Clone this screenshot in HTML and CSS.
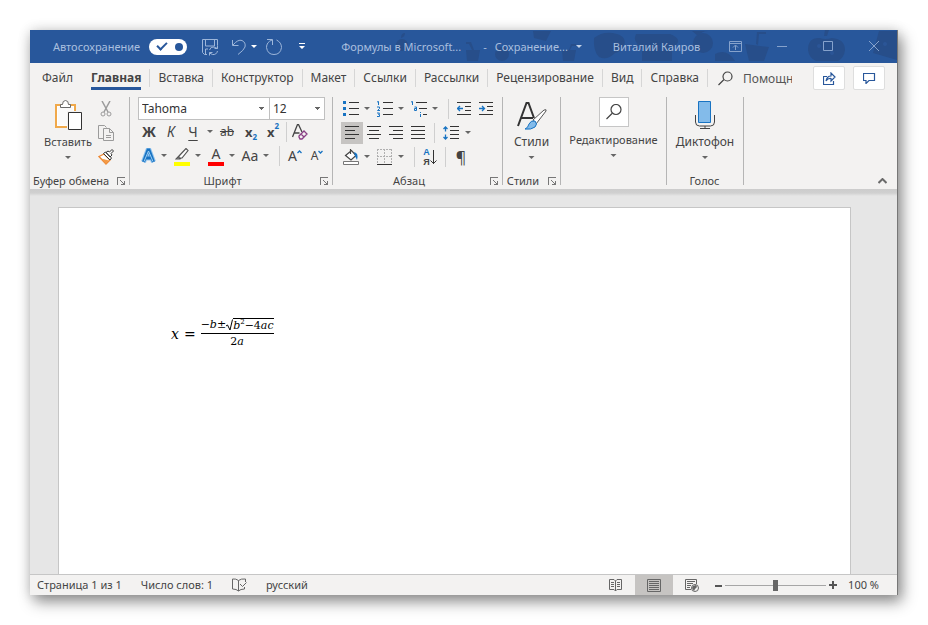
FILE: index.html
```html
<!DOCTYPE html>
<html lang="ru">
<head>
    <meta charset="UTF-8">
    <meta name="viewport" content="width=device-width, initial-scale=1.0">
    <title>Формулы в Microsoft Word</title>
    <link rel="stylesheet" href="styles.css">
</head>
<body>

    <div class="window">

        <!-- Title bar -->
        <header class="titlebar">
            <svg class="titlebar-art" width="400" height="33" viewBox="0 0 400 33" aria-hidden="true">
                <g fill="#274e8a">
                    <circle cx="6" cy="15" r="6"/><path d="M5 8q0-5 4-5q0 4-4 5z"/>
                    <path d="M70 20h14l-2 11h-11zM76 20l-3-6h-3v-2h5l3 8z"/>
                    <circle cx="106" cy="24" r="7"/>
                    <path d="M137 1h18l-5 10l-12-3z"/>
                    <path d="M166 20h14l-2 11h-11zM173 20l2-6h5v2h-4l-2 4z"/>
                    <path d="M198 8q10-8 23-4q10 3 7 12q-4 6-9 7q-8 8-16 4q-6-6-5-19z"/>
                    <path d="M240 4h34q13 5 5 12l-3 3v12h-30v-12q-10-8-6-15z"/>
                    <circle cx="307" cy="13" r="10"/><path d="M296 1l6 5q4-5 10-5z"/>
                    <path d="M319 24q12-6 20 7h-20z"/>
                    <path d="M349 14l24 3-5 14h-15zM360 14l1-12h9v2h-7l-1 11z"/>
                </g>
            </svg>
            <svg class="titlebar-art titlebar-art-right" width="92" height="33" viewBox="0 0 92 33" aria-hidden="true">
                <g fill="#274e8a">
                    <path d="M3 20q0-13 12-12q5 2 12 0q13 1 13 12q-1 8-7 11h-22q-7-3-8-11zM19 6l1-6h4l-2 6z"/>
                    <path d="M74 1h18v29l-24-7z"/>
                </g>
                <g fill="#2b5597"><circle cx="14" cy="16" r="2"/><circle cx="27" cy="23" r="2"/><circle cx="80" cy="14" r="2"/></g>
            </svg>

            <label class="autosave">
                <span>Автосохранение</span>
                <input type="checkbox" class="switch" checked>
            </label>
            <div class="quick">
                <button class="bar-btn" aria-label="Сохранить">
                    <svg width="18" height="18" viewBox="0 0 18 18"><path d="M6 16.500H3.500l-2-2V1.500h15v6M4.500 2v6h9V2M4.500 16v-5H7M8.500 12q1-3.500 4.500-3l3.500 1.500M16.500 7.500v3h-3M16.500 13q-1 4-5 3.500l-3-1.500M8.500 17.500v-3h3"/></svg>
                </button>
                <button class="bar-btn" aria-label="Отменить">
                    <svg width="16" height="18" viewBox="0 0 16 18"><path d="M1.500 2v5.500h6M2 7q5-6 9-4.500q4 2 3 6.500q-1 3-7 7.500"/></svg>
                </button>
                <button class="bar-btn bar-caret" aria-label="Список отмены">
                    <svg width="6" height="4" viewBox="0 0 6 4"><path class="solid" d="M0 0h6L3 3z"/></svg>
                </button>
                <button class="bar-btn" aria-label="Повторить">
                    <svg width="18" height="18" viewBox="0 0 18 18"><path d="M2 1.500h5.500V7M7 2Q1.500 4 1.500 9.500q1 7 7.500 7t7.500-7q0-5-5-7.500"/></svg>
                </button>
                <button class="bar-btn bar-more" aria-label="Настройка панели">
                    <svg width="6" height="7" viewBox="0 0 6 7"><path class="solid" d="M0 0h6v1H0zM0 3h6L3 6z"/></svg>
                </button>
            </div>
            <div class="doc-title">
                <span>Формулы в Microsoft...</span>
                <span>-</span>
                <span>Сохранение...</span>
                <svg width="6" height="4" viewBox="0 0 6 4"><path class="pale" d="M0 0h6L3 3z"/></svg>
            </div>
            <span class="user">Виталий Каиров</span>
            <div class="win-controls">
                <button class="bar-btn" aria-label="Параметры ленты">
                    <svg width="13" height="11" viewBox="0 0 13 11"><path d="M.5.5h12v10H.5zM.5 2.500h12M6.500 9V4.500M4 6.500l2.500-2.500L9 6.500"/></svg>
                </button>
                <button class="bar-btn" aria-label="Свернуть">
                    <svg width="11" height="11" viewBox="0 0 11 11"><path d="M0 5.500h10"/></svg>
                </button>
                <button class="bar-btn" aria-label="Развернуть">
                    <svg width="11" height="11" viewBox="0 0 11 11"><path d="M.5.5h9v9h-9z"/></svg>
                </button>
                <button class="bar-btn" aria-label="Закрыть">
                    <svg width="11" height="11" viewBox="0 0 11 11"><path d="M0 0l10 10M10 0L0 10"/></svg>
                </button>
            </div>
        </header>

        <!-- Tabs -->
        <nav class="tabs">
            <a href="#" class="tab tab-file">Файл</a>
            <a href="#" class="tab tab-active">Главная</a>
            <a href="#" class="tab">Вставка</a>
            <a href="#" class="tab">Конструктор</a>
            <a href="#" class="tab">Макет</a>
            <a href="#" class="tab">Ссылки</a>
            <a href="#" class="tab">Рассылки</a>
            <a href="#" class="tab">Рецензирование</a>
            <a href="#" class="tab">Вид</a>
            <a href="#" class="tab">Справка</a>
            <label class="tell-me">
                <svg width="15" height="15" viewBox="0 0 15 15"><path class="line" d="M.5 14L6 8.500M5 5.500a4.500 4.500 0 1 1 9 0a4.500 4.500 0 1 1-9 0z"/></svg>
                <input type="text" placeholder="Помощник" aria-label="Помощник">
            </label>
            <div class="tab-actions">
                <button class="card-btn" aria-label="Поделиться">
                    <svg width="13" height="13" viewBox="0 0 13 13"><path class="blue" d="M4 4.500H.5v8h10V9M3 9q1-5 5-5V1l4 4-4 4V6.500Q5 6 3 9z"/></svg>
                </button>
                <button class="card-btn" aria-label="Примечания">
                    <svg width="13" height="12" viewBox="0 0 13 12"><path class="blue" d="M.5 1.500h11v7H6l-3 3v-3H.5z"/></svg>
                </button>
            </div>
        </nav>

        <!-- Ribbon -->
        <main class="ribbon">
            <section class="group group-clipboard">
                <div class="group-body clipboard">
                    <button class="big-btn">
                        <svg width="28" height="31" viewBox="0 0 28 31">
                            <path d="M2 5h19v22H2z" fill="#fff" stroke="#f0a94b" stroke-width="2"/>
                            <path d="M4 7h15v18H4z" fill="#fafafa"/>
                            <path d="M6.500 7.500v-3h2q0-4 3-4t3 4h2v3z" fill="#fff" stroke="#6a6a6a"/>
                            <path d="M13 11h15v20H13z" fill="#f3f2f1"/>
                            <path d="M14.500 12.500h13v17h-13z" fill="#fff" stroke="#333"/>
                        </svg>
                        <span>Вставить</span>
                        <i class="caret"></i>
                    </button>
                    <div class="stack">
                        <button class="tool" aria-label="Вырезать">
                            <svg width="12" height="16" viewBox="0 0 12 16"><path d="M2 0l6 11M10 0L4 11" fill="none" stroke="#9b9b9b" stroke-width="1.500"/><circle cx="3" cy="13" r="2" fill="none" stroke="#9b9b9b"/><circle cx="9" cy="13" r="2" fill="none" stroke="#9b9b9b"/></svg>
                        </button>
                        <button class="tool" aria-label="Копировать">
                            <svg width="16" height="16" viewBox="0 0 16 16"><path d="M5 13.500H.5V.5h6l2 2M5.500 3.500h6l4 4v8h-10zM11.500 3.500v4h4M8 10.500h5M8 12.500h5" fill="none" stroke="#9b9b9b"/></svg>
                        </button>
                        <button class="tool" aria-label="Формат по образцу">
                            <svg width="16" height="16" viewBox="0 0 16 16"><path d="M1 7.500L6 5l6 6-4 4z" fill="#fff" stroke="#ed8733" stroke-width="1.300"/><path d="M3 9.500l8 2-3 3.500z" fill="#f39a45"/><path d="M5.500 4.500l2-1.500 6 6-1.500 2zM8 3.500l2-1.500 1.500 1L14 .5 15.500 2 13 4.500l1 1.500-2 2z" fill="#fff" stroke="#333"/></svg>
                        </button>
                    </div>
                </div>
                <footer class="group-label"><span>Буфер обмена</span><button class="launcher" aria-label="Буфер обмена: параметры"></button></footer>
            </section>

            <section class="group group-font">
                <div class="group-body">
                    <div class="row row-combos">
                        <select class="combo combo-font" aria-label="Шрифт"><option>Tahoma</option></select>
                        <select class="combo combo-size" aria-label="Размер"><option>12</option></select>
                    </div>
                    <div class="row">
                        <button class="tool bold">Ж</button>
                        <button class="tool italic">К</button>
                        <button class="tool underline">Ч</button>
                        <i class="caret"></i>
                        <button class="tool strike">ab</button>
                        <button class="tool index">x<sub>2</sub></button>
                        <button class="tool index">x<sup>2</sup></button>
                        <i class="rule rule-thin"></i>
                        <button class="tool" aria-label="Очистить формат">
                            <svg width="16" height="16" viewBox="0 0 16 16"><path d="M.5 13L5.500.5h1L10 8M2.500 9h5" fill="none" stroke="#444" stroke-width="1.300"/><path d="M7 12l5-5 3 3-5 5H8l-1-2zM9 10l3 3" fill="#f3f2f1" stroke="#8a3f86" stroke-width="1.300"/></svg>
                        </button>
                    </div>
                    <div class="row row-split">
                        <button class="tool" aria-label="Текстовые эффекты">
                            <svg width="15" height="16" viewBox="0 0 15 16"><path d="M2.500 14L7 2h1l4.500 12M4.500 10h6" fill="none" stroke="#8fc3ee" stroke-width="5"/><path d="M2.500 14L7 2h1l4.500 12M4.500 10h6" fill="none" stroke="#1873c2" stroke-width="3"/><path d="M3 13.500L7.500 3L12 13.500" fill="none" stroke="#9fd0f5"/></svg>
                        </button>
                        <i class="caret"></i>
                        <button class="tool swatch swatch-yellow" aria-label="Цвет выделения">
                            <svg width="14" height="14" viewBox="0 0 14 14"><path d="M4 8L11 .5l2 2L7 10H4zM4 8L1 11h4l1-1" fill="#fff" stroke="#555" stroke-width="1.200"/></svg>
                        </button>
                        <i class="caret"></i>
                        <button class="tool swatch swatch-red">А</button>
                        <i class="caret"></i>
                        <button class="tool">Aa</button>
                        <i class="caret"></i>
                        <i class="rule"></i>
                        <button class="tool grow" aria-label="Увеличить размер">A<svg width="5" height="4" viewBox="0 0 5 4"><path class="accent" d="M.5 3l2-2 2 2"/></svg></button>
                        <button class="tool grow shrink" aria-label="Уменьшить размер">A<svg width="5" height="4" viewBox="0 0 5 4"><path class="accent" d="M.5 1l2 2 2-2"/></svg></button>
                    </div>
                </div>
                <footer class="group-label"><span>Шрифт</span><button class="launcher" aria-label="Шрифт: параметры"></button></footer>
            </section>

            <section class="group group-para">
                <div class="group-body">
                    <div class="row row-split row-lists">
                        <button class="tool" aria-label="Маркеры">
                            <svg width="16" height="16" viewBox="0 0 16 16"><path fill="#1873c2" d="M0 0h3v3H0zM0 6h3v3H0zM0 12h3v3H0z"/><path class="dark" d="M6 1.500h10M6 7.500h10M6 13.500h10"/></svg>
                        </button>
                        <i class="caret"></i>
                        <button class="tool" aria-label="Нумерация">
                            <svg width="16" height="16" viewBox="0 0 16 16"><path d="M0 1l1.500-.5V4M0 6h2.500v1.500L.5 9.500H3M0 12h2.500l-1 1.500h1v2H0" fill="none" stroke="#1873c2"/><path class="dark" d="M6 1.500h10M6 7.500h10M6 13.500h10"/></svg>
                        </button>
                        <i class="caret"></i>
                        <button class="tool" aria-label="Многоуровневый список">
                            <svg width="16" height="16" viewBox="0 0 16 16"><path d="M0 1l1.500-.5V4M3.500 6h2v3.500h-2v-2h2M9.500 11v1M9.500 13v3" fill="none" stroke="#1873c2"/><path class="dark" d="M5 1.500h11M8 7.500h8M12 13.500h4"/></svg>
                        </button>
                        <i class="caret"></i>
                        <i class="rule"></i>
                        <button class="tool" aria-label="Уменьшить отступ">
                            <svg width="15" height="14" viewBox="0 0 15 14"><path class="dark" d="M0 .5h14M8 4.500h6M8 8.500h6M0 12.500h14"/><path class="accent" d="M6 6.500H1M3 4L.5 6.500L3 9"/></svg>
                        </button>
                        <button class="tool" aria-label="Увеличить отступ">
                            <svg width="15" height="14" viewBox="0 0 15 14"><path class="dark" d="M0 .5h14M8 4.500h6M8 8.500h6M0 12.500h14"/><path class="accent" d="M0 6.500h5M3 4l2.500 2.500L3 9"/></svg>
                        </button>
                    </div>
                    <div class="row">
                        <button class="tool pressed" aria-label="По левому краю">
                            <svg width="14" height="14" viewBox="0 0 14 14"><path class="dark" d="M0 .5h14M0 4.500h10M0 8.500h14M0 12.500h10"/></svg>
                        </button>
                        <button class="tool" aria-label="По центру">
                            <svg width="14" height="14" viewBox="0 0 14 14"><path class="dark" d="M0 .5h14M2 4.500h10M0 8.500h14M2 12.500h10"/></svg>
                        </button>
                        <button class="tool" aria-label="По правому краю">
                            <svg width="14" height="14" viewBox="0 0 14 14"><path class="dark" d="M0 .5h14M4 4.500h10M0 8.500h14M4 12.500h10"/></svg>
                        </button>
                        <button class="tool" aria-label="По ширине">
                            <svg width="14" height="14" viewBox="0 0 14 14"><path class="dark" d="M0 .5h14M0 4.500h14M0 8.500h14M0 12.500h14"/></svg>
                        </button>
                        <i class="rule"></i>
                        <button class="tool" aria-label="Интервал">
                            <svg width="16" height="14" viewBox="0 0 16 14"><path class="accent" d="M2.500 1v4.500M.5 3l2-2 2 2M2.500 13V8.500M.5 11l2 2 2-2"/><path class="dark" d="M7 .5h9M7 4.500h9M7 8.500h9M7 12.500h9"/></svg>
                        </button>
                        <i class="caret"></i>
                    </div>
                    <div class="row row-split">
                        <button class="tool" aria-label="Заливка">
                            <svg width="16" height="16" viewBox="0 0 16 16"><path d="M2.500 6.500l6-5 4.500 5-5 4.500z M7.500 0v5" fill="#fff" stroke="#444" stroke-width="1.200"/><path d="M11 3q5 1 3 8l-2-4z" fill="#1873c2"/><path d="M.5 12.500h15v3H.5z" fill="#fff" stroke="#777"/></svg>
                        </button>
                        <i class="caret"></i>
                        <button class="tool" aria-label="Границы">
                            <svg width="16" height="16" viewBox="0 0 16 16"><path d="M.5 0v14M7.500 0v14M14.500 0v14M0 .5h15M0 7.500h15" fill="none" stroke="#b0b0b0" stroke-dasharray="2 1"/><path class="dark" d="M0 15.500h15"/></svg>
                        </button>
                        <i class="caret"></i>
                        <i class="rule"></i>
                        <button class="tool" aria-label="Сортировка">
                            <span class="sort-letters"><b>А</b><b>Я</b></span>
                            <svg width="7" height="15" viewBox="0 0 7 15"><path class="dark" d="M3.500 0v14M.5 10.500l3 3 3-3"/></svg>
                        </button>
                        <i class="rule"></i>
                        <button class="tool pilcrow">¶</button>
                    </div>
                </div>
                <footer class="group-label"><span>Абзац</span><button class="launcher" aria-label="Абзац: параметры"></button></footer>
            </section>

            <section class="group group-styles">
                <div class="group-body">
                    <button class="big-btn">
                        <svg width="30" height="31" viewBox="0 0 30 31">
                            <path d="M1 26L9.500 3h2L17 18M4 18h12" fill="none" stroke="#333" stroke-width="2"/>
                            <path d="M16 20L27 10q3-1 2 1L19 24z" fill="#fff" stroke="#555"/>
                            <path d="M8 29q3-1 4-5q2-4 6-3q3 3 0 6q-4 3-10 2z" fill="#83bbea" stroke="#1873c2"/>
                        </svg>
                        <span>Стили</span>
                        <i class="caret"></i>
                    </button>
                </div>
                <footer class="group-label"><span>Стили</span><button class="launcher" aria-label="Стили: параметры"></button></footer>
            </section>

            <section class="group group-edit">
                <div class="group-body">
                    <button class="big-btn">
                        <span class="frame"><svg width="16" height="16" viewBox="0 0 16 16"><path class="line" d="M.5 15L6 9.500M5 5.500a5 5 0 1 1 10 0a5 5 0 1 1-10 0z"/></svg></span>
                        <span>Редактирование</span>
                        <i class="caret"></i>
                    </button>
                </div>
            </section>

            <section class="group group-voice">
                <div class="group-body">
                    <button class="big-btn">
                        <svg width="20" height="31" viewBox="0 0 20 31">
                            <path d="M.5 15v7q0 4 4 4h11q4 0 4-4v-7M10 26v3M5 28.500h10" fill="none" stroke="#444"/>
                            <path d="M3.500 1.500h12v21h-12z" fill="#83bbea" stroke="#1873c2" stroke-linejoin="round"/>
                        </svg>
                        <span>Диктофон</span>
                        <i class="caret"></i>
                    </button>
                </div>
                <footer class="group-label"><span>Голос</span></footer>
            </section>

            <button class="collapse" aria-label="Свернуть ленту">
                <svg width="9" height="6" viewBox="0 0 9 6"><path d="M.5 5l4-4 4 4" fill="none" stroke="#6a6a6a" stroke-width="2"/></svg>
            </button>
        </main>

        <!-- Document -->
        <div class="workspace">
            <article class="page">
                <div class="formula">
                    <i>x</i><span class="equals">=</span>
                    <span class="fraction">
                        <span class="numerator">−<i>b</i>±<svg width="7" height="12" viewBox="0 0 7 12"><path d="M0 7l1.500-1L4 11L6.500.5" fill="none" stroke="#000"/></svg><span class="radicand"><i>b</i><sup>2</sup>−4<i>ac</i></span></span>
                        <span class="denominator">2<i>a</i></span>
                    </span>
                </div>
            </article>
        </div>

        <!-- Status bar -->
        <footer class="status">
            <span>Страница 1 из 1</span>
            <span>Число слов: 1</span>
            <svg width="15" height="14" viewBox="0 0 15 14"><path class="grey" d="M6.500 2.500Q4 .5.500 1v10q4 0 6 2q2-2 6-2V9M6.500 2.500V13M6.500 2.500Q9 .5 13.500 1v3M8 6l2.500 2.500 4-4"/></svg>
            <span>русский</span>
            <div class="views">
                <button class="view" aria-label="Режим чтения">
                    <svg width="14" height="13" viewBox="0 0 14 13"><path class="grey" d="M6.500 2L5 .5H.5v10H5L6.500 12L8 10.500h4.500V.5H8zM6.500 2v10M2 3.500h3M2 5.500h3M2 7.500h3M8 3.500h3M8 5.500h3M8 7.500h3"/></svg>
                </button>
                <button class="view view-on" aria-label="Разметка страницы">
                    <svg width="14" height="13" viewBox="0 0 14 13"><path class="grey" d="M.5.5h13v12H.5zM2 2.500h10M2 4.500h10M2 6.500h10M2 8.500h10M2 10.500h10"/></svg>
                </button>
                <button class="view" aria-label="Веб-документ">
                    <svg width="14" height="13" viewBox="0 0 14 13"><path class="grey" d="M6 10.500H.5V.5h11V5M2 2.500h8M2 4.500h6M2 6.500h4M2 8.500h3"/><circle cx="10" cy="9" r="3.500" fill="#f3f2f1" stroke="#666"/><path fill="#666" d="M8 7l3-1 1 2-2 2-1 2-2-3z"/></svg>
                </button>
            </div>
            <div class="zoom">
                <button aria-label="Уменьшить"><svg width="7" height="7" viewBox="0 0 7 7"><path fill="#555" d="M0 3h7v2H0z"/></svg></button>
                <input type="range" class="zoom-range" min="0" max="100" value="50" aria-label="Масштаб">
                <button aria-label="Увеличить"><svg width="8" height="8" viewBox="0 0 8 8"><path fill="#555" d="M0 3h3V0h2v3h3v2H5v3H3V5H0z"/></svg></button>
                <span>100 %</span>
            </div>
        </footer>
    </div>

</body>
</html>
```

FILE: styles.css
```css
/* --- Basic Setup & Theme --- */
:root {
    --brand: #28579b;
    --chrome: #f3f2f1;
    --text: #444444;
    --accent: #1873c2;
    --line: #c6c6c6;
}

* { box-sizing: border-box; }

body {
    margin: 0;
    padding: 30px;
    min-height: 100vh;
    display: flex;
    background-color: #ffffff;
    color: var(--text);
    font-family: "Noto Sans", "Open Sans", sans-serif;
    font-size: 12px;
    line-height: 16px;
}

button, input, select { font: inherit; color: inherit; }

button {
    padding: 0;
    border: none;
    background: none;
}

svg { display: block; flex: none; }

.line { fill: none; stroke: #444; stroke-width: 1.2; }
.dark { fill: none; stroke: #333; }
.blue { fill: none; stroke: var(--brand); stroke-width: 1.2; }
.accent { fill: none; stroke: var(--accent); stroke-width: 1.3; }
.grey { fill: none; stroke: #666; }

.window {
    flex: 1;
    min-width: 0;
    display: flex;
    flex-direction: column;
    border-right: 1px solid #777;
    box-shadow: 4px 7px 14px rgba(0, 0, 0, 0.42), 0 0 12px rgba(0, 0, 0, 0.14);
}

/* --- Title Bar --- */
.titlebar {
    position: relative;
    display: flex;
    align-items: center;
    height: 33px;
    padding-left: 23px;
    background-color: var(--brand);
    color: #a9bfdf;
    font-size: 11px;
    white-space: nowrap;
}

.titlebar > :not(.titlebar-art) { position: relative; }

.titlebar-art { position: absolute; top: 0; right: 101px; }
.titlebar-art-right { right: 0; }

.autosave { display: flex; align-items: center; gap: 9px; }

.switch {
    appearance: none;
    width: 38px;
    height: 16px;
    margin: 0;
    border-radius: 8px;
    background-color: #fff;
    display: flex;
    align-items: center;
    justify-content: space-between;
    padding: 0 4px 0 8px;
}
.switch::before {
    content: "";
    width: 8px;
    height: 4px;
    margin-bottom: 3px;
    border-left: 2px solid var(--brand);
    border-bottom: 2px solid var(--brand);
    transform: rotate(-45deg);
}
.switch::after {
    content: "";
    width: 8px;
    height: 8px;
    border-radius: 50%;
    background-color: var(--brand);
}

.bar-btn path { fill: none; stroke: #9db6da; }
.bar-btn .solid { fill: #fff; stroke: none; }
.pale { fill: #c5d3e8; }

.quick { display: flex; align-items: center; margin-left: 14px; gap: 12px; }
.bar-caret { margin-left: -8px; margin-right: -4px; }
.bar-more { margin-left: 4px; }

.doc-title { display: flex; align-items: center; gap: 8px; margin-left: 36px; }
.doc-title span:first-child { margin-right: 14px; }

.user { margin-left: 31px; }

.win-controls { display: flex; align-items: center; gap: 35px; margin-left: auto; margin-right: 17px; }
.win-controls path { stroke: #86a2cc; }

/* --- Tabs --- */
.tabs {
    display: flex;
    align-items: center;
    height: 30px;
    padding: 0 12px 0 4px;
    background-color: var(--chrome);
}

.tab {
    padding: 1px 8px;
    border-left: 1px solid #d6d6d6;
    color: var(--text);
    text-decoration: none;
}
.tab-file, .tab-active { border-left-color: transparent; }
.tab-active { margin-left: 9px; font-weight: bold; position: relative; }
.tab-active::after {
    content: "";
    position: absolute;
    left: 8px;
    right: 8px;
    bottom: -3px;
    height: 3px;
    background-color: var(--brand);
}
.tab-file { padding-right: 0; padding-left: 7px; }

.tell-me {
    display: flex;
    align-items: center;
    gap: 10px;
    padding-left: 10px;
    border-left: 1px solid #d6d6d6;
}
.tell-me input {
    width: 49px;
    height: 18px;
    padding: 0;
    border: none;
    background: none;
}
.tell-me input::placeholder { color: #555; }

.tab-actions { display: flex; gap: 8px; margin-left: auto; }
.card-btn {
    display: flex;
    align-items: center;
    justify-content: center;
    width: 32px;
    height: 24px;
    border: 1px solid #dedede;
    border-radius: 2px;
    background-color: #fff;
}

/* --- Ribbon --- */
.ribbon {
    display: flex;
    padding: 4px 0;
    background-color: var(--chrome);
}

.group {
    display: flex;
    flex-direction: column;
    justify-content: space-between;
    flex: none;
    height: 88px;
    border-right: 1px solid #b5b5b5;
}
.group-clipboard { width: 100px; }
.group-font { width: 203px; }
.group-para { width: 170px; }
.group-styles { width: 58px; }
.group-edit { width: 106px; }
.group-voice { width: 77px; }
.group-font .group-body { padding-left: 8px; }
.group-para .group-body { padding-left: 8px; }

.group-label {
    display: flex;
    align-items: center;
    height: 16px;
    margin-bottom: -4px;
    padding: 0 4px 0 3px;
    font-size: 11px;
    white-space: nowrap;
}
.group-label span { flex: 1; text-align: center; }

.launcher {
    flex: none;
    width: 8px;
    height: 8px;
    margin-left: 8px;
    border-left: 1px solid #777;
    border-top: 1px solid #777;
    background:
        linear-gradient(#777, #777) right bottom / 4px 1px no-repeat,
        linear-gradient(#777, #777) right bottom / 1px 4px no-repeat,
        linear-gradient(to bottom left, transparent 42%, #777 42%, #777 58%, transparent 58%) right bottom / 5px 5px no-repeat;
}

.caret {
    flex: none;
    width: 12px;
    height: 4px;
    background-color: #666;
    clip-path: polygon(3px 0, 9px 0, 6px 3px);
}

.clipboard { display: flex; }
.clipboard .big-btn { width: 76px; font-size: 11px; }
.stack { margin-left: -12px; }
.stack .tool { width: 24px; height: 24px; }

.big-btn {
    display: flex;
    flex-direction: column;
    align-items: center;
    width: 100%;
    padding-top: 3px;
    white-space: nowrap;
}
.big-btn .caret { margin-top: 6px; }
.big-btn span { margin-top: 3px; }

.big-btn .frame {
    display: flex;
    align-items: center;
    justify-content: center;
    width: 30px;
    height: 30px;
    margin: 0;
    border: 1px solid var(--line);
    background-color: #fff;
}
.group-edit .big-btn { padding-top: 0; font-size: 11px; }
.group-edit .big-btn span:nth-child(2) { margin-top: 5px; }

.row { display: flex; align-items: center; height: 24px; }

.tool {
    display: flex;
    align-items: center;
    justify-content: center;
    flex: none;
    width: 22px;
    height: 22px;
    font-size: 14px;
    line-height: 20px;
}
.row-split .tool { width: 20px; }
.row-split .caret { margin-right: 2px; }
.row-lists .rule + .tool { margin-right: 2px; }
.pressed { background-color: #c6c4c2; }

.rule {
    flex: none;
    width: 1px;
    height: 20px;
    margin: 0 5px;
    background-color: #cfcfcf;
}
.rule-thin { margin: 0 2px; }

.row-combos { height: 23px; }
.combo {
    appearance: none;
    height: 23px;
    padding: 0 3px;
    border: 1px solid #c0c0c0;
    border-radius: 0;
    background: conic-gradient(from -45deg at 50% 100%, #666 90deg, transparent 0) right 4px center / 6px 3px no-repeat #fff;
    color: #333;
}
.combo-font { width: 132px; }
.combo-size { width: 56px; margin-left: -1px; }

.bold { font-weight: bold; }
.italic { font-style: italic; }
.underline { text-decoration: underline; text-underline-offset: 3px; }
.strike { font-size: 12px; text-decoration: line-through; }
.index { font-weight: bold; font-size: 13px; }
.index sub, .index sup { font-size: 8px; line-height: 8px; color: var(--accent); }
.index sub { margin-top: 10px; }
.index sup { margin-bottom: 12px; }
.strike + .index { margin-left: 2px; }

.swatch {
    flex-direction: column;
    justify-content: flex-end;
    height: 20px;
    border-bottom: 4px solid;
    line-height: 16px;
    margin: 0 2px;
}
.row-split .swatch { width: 16px; }
.swatch-yellow { border-bottom-color: #ffff00; }
.swatch-red { border-bottom-color: #ff0000; }
.grow svg { margin-bottom: 8px; }
.shrink { font-size: 12px; margin-left: 2px; }

.sort-letters {
    display: flex;
    flex-direction: column;
    font-family: "Liberation Sans", sans-serif;
    font-size: 9px;
    line-height: 10px;
}
.sort-letters b:first-child { color: var(--accent); }
.pilcrow { font-size: 16px; }

.collapse { align-self: flex-end; margin-left: auto; padding: 0 10px 1px; }

/* --- Document --- */
.workspace {
    flex: 1;
    display: flex;
    padding: 18px 46px 0 28px;
    background: linear-gradient(#cccccc, #d0d0d0 4px, #e6e6e6 7px);
}

.page {
    flex: 1;
    padding: 109px 0 0 112px;
    border: 1px solid var(--line);
    border-bottom: none;
    background-color: #fff;
}

.formula {
    display: flex;
    align-items: center;
    color: #000;
    font-family: "DejaVu Serif", serif;
    font-size: 14px;
}
.equals { margin: 0 5px; }

.fraction {
    display: flex;
    flex-direction: column;
    align-items: center;
    font-size: 11px;
}
.numerator {
    display: flex;
    align-items: center;
    border-bottom: 1px solid #000;
}
.radicand { height: 14px; line-height: 14px; border-top: 1px solid #000; }
.radicand sup { font-size: 7px; line-height: 7px; }

/* --- Status Bar --- */
.status {
    display: flex;
    align-items: center;
    gap: 19px;
    height: 21px;
    padding-left: 7px;
    border-top: 1px solid var(--line);
    background-color: var(--chrome);
    font-size: 11px;
}

.views { display: flex; align-self: stretch; margin-left: auto; }
.view { display: flex; align-items: center; justify-content: center; width: 38px; }
.view-on { background-color: #c6c4c2; }

.zoom { display: flex; align-items: center; gap: 3px; margin-left: -15px; padding-right: 18px; }
.zoom span { margin-left: 8px; }

.zoom-range {
    appearance: none;
    width: 101px;
    height: 12px;
    margin: 0;
    background: linear-gradient(#a6a6a6, #a6a6a6) center / 100% 1px no-repeat;
}
.zoom-range::-webkit-slider-thumb {
    appearance: none;
    width: 5px;
    height: 11px;
    background-color: #666;
}
```
